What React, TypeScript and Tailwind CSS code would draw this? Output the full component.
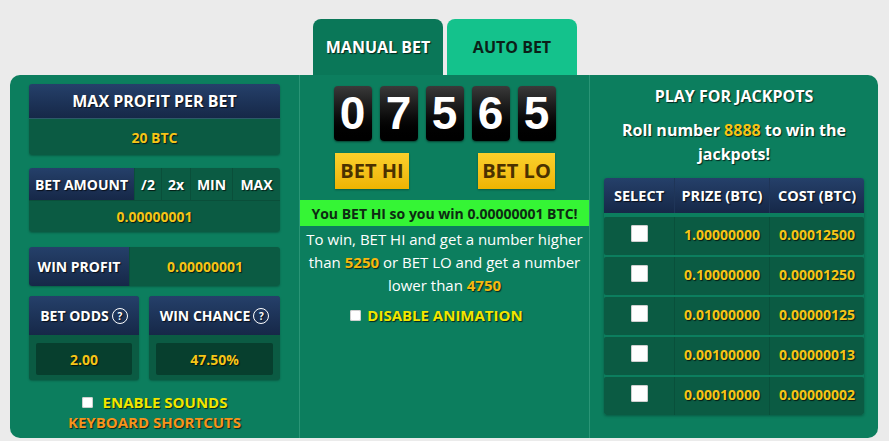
const shadow = "[text-shadow:1px_1px_1px_rgba(0,0,0,0.7)]";
const navy = "bg-linear-to-b from-[#25406a] to-[#162848]";

const Help = () => (
  <span className="ml-[3px] inline-flex h-[16px] w-[16px] items-center justify-center rounded-full border-[1.5px] border-white text-[10px] leading-none">
    ?
  </span>
);

const Box = ({ size = "w-[11px] h-[11px]" }: { size?: string }) => (
  <span className={`inline-block ${size} rounded-[2px] bg-white shadow-[inset_0_0_0_1px_#cfcfcf]`} />
);

const digits = ["0", "7", "5", "6", "5"];

const jackpots = [
  ["1.00000000", "0.00012500"],
  ["0.10000000", "0.00001250"],
  ["0.01000000", "0.00000125"],
  ["0.00100000", "0.00000013"],
  ["0.00010000", "0.00000002"],
];

const LeftColumn = () => (
  <div className="flex w-[289px] flex-col px-[19px] pt-[9px]">
    <div className="rounded-[3px] shadow-[0_1px_2px_rgba(0,0,0,0.25)]">
      <div className={`${navy} flex h-[35px] items-center justify-center rounded-t-[3px] border-b border-[#2d5a6a] text-[16px] font-bold text-white ${shadow}`}>
        MAX PROFIT PER BET
      </div>
      <div className={`flex h-[36px] items-center justify-center rounded-b-[3px] bg-[#0b5b43] text-[14px] font-bold text-[#f5c518] ${shadow}`}>
        20 BTC
      </div>
    </div>

    <div className="mt-[13px] overflow-hidden rounded-[3px] shadow-[0_1px_2px_rgba(0,0,0,0.25)]">
      <div className={`flex h-[32px] text-[14px] font-bold text-white ${shadow}`}>
        <div className={`${navy} flex w-[105px] items-center justify-center`}>BET AMOUNT</div>
        <div className="flex w-[27px] items-center justify-center border-l border-[#0a4f3a] bg-[#0b5b43]">/2</div>
        <div className="flex w-[29px] items-center justify-center border-l border-[#0a4f3a] bg-[#0b5b43]">2x</div>
        <div className="flex w-[42px] items-center justify-center border-l border-[#0a4f3a] bg-[#0b5b43]">MIN</div>
        <div className="flex flex-1 items-center justify-center border-l border-[#0a4f3a] bg-[#0b5b43]">MAX</div>
      </div>
      <div className={`flex h-[32px] items-center justify-center border-t border-[#0a4f3a] bg-[#0b5b43] text-[14px] font-bold text-[#f5c518] ${shadow}`}>
        0.00000001
      </div>
    </div>

    <div className="mt-[15px] flex h-[39px] overflow-hidden rounded-[3px] shadow-[0_1px_2px_rgba(0,0,0,0.25)]">
      <div className={`${navy} flex w-[100px] items-center justify-center text-[14px] font-bold text-white ${shadow}`}>
        WIN PROFIT
      </div>
      <div className={`flex flex-1 items-center justify-center border-l border-[#0a4f3a] bg-[#0b5b43] text-[14px] font-bold text-[#f5c518] ${shadow}`}>
        0.00000001
      </div>
    </div>

    <div className="mt-[10px] flex gap-[10px]">
      {[
        ["BET ODDS", "2.00", "w-[110px]"],
        ["WIN CHANCE", "47.50%", "flex-1"],
      ].map(([label, value, w]) => (
        <div key={label} className={`${w} overflow-hidden rounded-[3px] bg-[#0b5b43] shadow-[0_1px_2px_rgba(0,0,0,0.25)]`}>
          <div className={`${navy} flex h-[39px] items-center justify-center text-[14px] font-bold text-white ${shadow}`}>
            {label}
            <Help />
          </div>
          <div className="px-[7px] pb-[5px] pt-[8px]">
            <div className={`flex h-[32px] items-center justify-center rounded-[2px] bg-[#073f2e] text-[14px] font-bold text-[#f5c518] ${shadow}`}>
              {value}
            </div>
          </div>
        </div>
      ))}
    </div>

    <div className={`mt-[12px] flex items-center justify-center gap-[10px] text-[15px] font-bold leading-[20px] text-[#f2e600] ${shadow}`}>
      <Box size="w-[11px] h-[11px]" />
      ENABLE SOUNDS
    </div>
    <div className={`text-center text-[15px] font-bold leading-[20px] text-[#f7941d] ${shadow}`}>
      KEYBOARD SHORTCUTS
    </div>
  </div>
);

const MiddleColumn = () => (
  <div className="flex w-[291px] flex-col items-center border-x border-[#2a9576] pt-[11px]">
    <div className="flex gap-[8px]">
      {digits.map((d, i) => (
        <div
          key={i}
          className="flex h-[55px] w-[38px] items-center justify-center rounded-[4px] bg-linear-to-b from-[#3a3a3a] via-[#111] to-[#000] font-['Liberation_Sans',Arial,sans-serif] text-[46px] font-bold text-white shadow-[0_1px_2px_rgba(0,0,0,0.5)]"
        >
          {d}
        </div>
      ))}
    </div>

    <div className="mt-[12px] flex w-full justify-between pl-[35px] pr-[34px]">
      <button className="flex h-[36px] w-[74px] items-center justify-center bg-linear-to-b from-[#fbd02a] to-[#eeb400] text-[20px] font-bold text-[#4b3100] shadow-[0_1px_2px_rgba(0,0,0,0.3)]">
        BET HI
      </button>
      <button className="flex h-[36px] w-[77px] items-center justify-center bg-linear-to-b from-[#fbd02a] to-[#eeb400] text-[20px] font-bold text-[#4b3100] shadow-[0_1px_2px_rgba(0,0,0,0.3)]">
        BET LO
      </button>
    </div>

    <div className="mt-[11px] flex h-[26px] w-full items-center justify-center bg-[#35f535] text-[14px] font-bold text-[#0d2b12]">
      You BET HI so you win 0.00000001 BTC!
    </div>

    <p className="mt-[2px] px-[2px] text-center text-[15px] leading-[23px] text-white">
      To win, BET HI and get a number higher than{" "}
      <span className={`font-bold text-[#f5b90f] ${shadow}`}>5250</span> or BET LO and get a number
      lower than <span className={`font-bold text-[#f5b90f] ${shadow}`}>4750</span>
    </p>

    <div className={`mt-[7px] flex items-center gap-[6px] pr-[16px] text-[15px] font-bold text-[#f2e600] ${shadow}`}>
      <Box size="w-[11px] h-[11px]" />
      DISABLE ANIMATION
    </div>
  </div>
);

const RightColumn = () => (
  <div className="flex w-[288px] flex-col items-center pt-[11px]">
    <div className={`text-[16px] font-bold leading-[20px] text-white ${shadow}`}>PLAY FOR JACKPOTS</div>
    <div className={`mt-[12px] w-[240px] text-center text-[16px] font-bold leading-[24px] text-white ${shadow}`}>
      Roll number <span className="text-[#f5c518]">8888</span> to win the jackpots!
    </div>

    <div className="mt-[12px] w-[260px] overflow-hidden rounded-[3px] shadow-[0_1px_3px_rgba(0,0,0,0.3)]">
      <div className={`${navy} grid h-[35px] grid-cols-[70px_95px_95px] text-[14.5px] font-bold text-white ${shadow}`}>
        <div className="flex items-center justify-center">SELECT</div>
        <div className="flex items-center justify-center border-l border-[#1f3558]">PRIZE (BTC)</div>
        <div className="flex items-center justify-center border-l border-[#1f3558]">COST (BTC)</div>
      </div>
      <div className="flex flex-col gap-[2px] bg-[#0c7e5e] pt-[4px]">
        {jackpots.map(([prize, cost]) => (
          <div
            key={prize}
            className={`grid h-[38px] grid-cols-[70px_95px_95px] rounded-[2px] bg-[#0b5b43] text-[14px] font-bold text-[#f5c518] ${shadow}`}
          >
            <div className="flex items-center justify-center pb-[5px]">
              <Box size="w-[17px] h-[17px]" />
            </div>
            <div className="flex items-center justify-center border-l border-[#09503b] pb-[4px]">{prize}</div>
            <div className="flex items-center justify-center border-l border-[#09503b] pb-[4px]">{cost}</div>
          </div>
        ))}
      </div>
    </div>
  </div>
);

export default function App() {
  return (
    <div className="h-[441px] w-[889px] bg-[#ebebeb] pt-[19px] font-['Open_Sans',sans-serif]">
      <div className="flex gap-[4px] pl-[313px]">
        <div className={`flex h-[56px] w-[130px] items-center justify-center rounded-t-[8px] bg-[#0a7758] text-[16px] font-bold text-white ${shadow}`}>
          MANUAL BET
        </div>
        <div className="flex h-[56px] w-[130px] items-center justify-center rounded-t-[8px] bg-[#14c28c] text-[16px] font-bold text-[#0b1f18]">
          AUTO BET
        </div>
      </div>
      <div className="ml-[10px] flex h-[363px] w-[868px] rounded-[10px] bg-[#0c7e5e]">
        <LeftColumn />
        <MiddleColumn />
        <RightColumn />
      </div>
    </div>
  );
}
